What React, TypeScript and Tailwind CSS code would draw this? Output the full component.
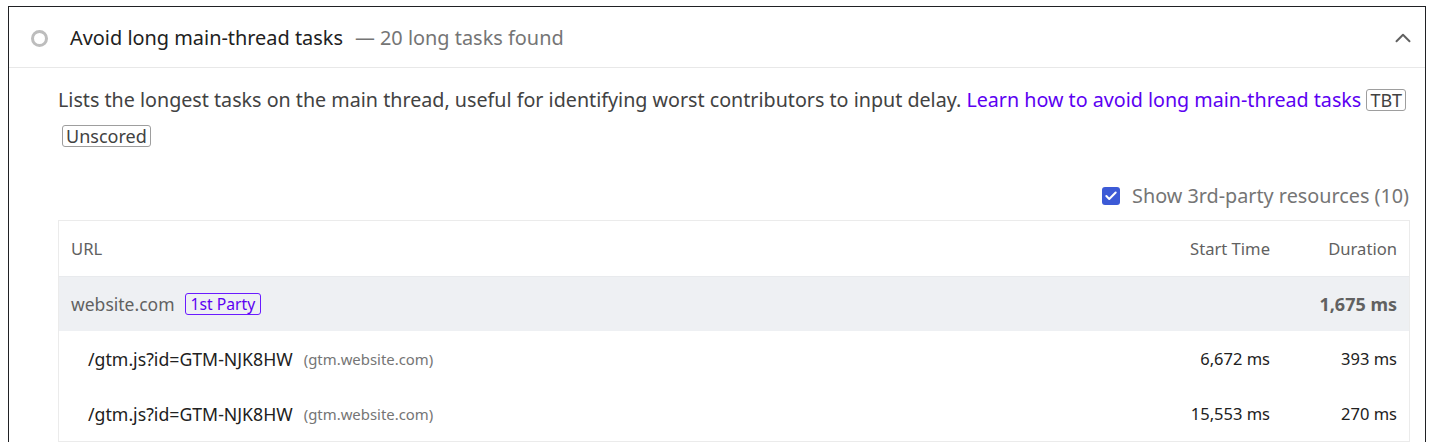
import { Check, ChevronUp } from 'lucide-react';

type Task = { url: string; host: string; start: string; duration: string };

const tasks: Task[] = [
  { url: '/gtm.js?id=GTM-NJK8HW', host: '(gtm.website.com)', start: '6,672 ms', duration: '393 ms' },
  { url: '/gtm.js?id=GTM-NJK8HW', host: '(gtm.website.com)', start: '15,553 ms', duration: '270 ms' },
];

function Badge({ children }: { children: React.ReactNode }) {
  return (
    <span className="inline-block border border-[#9e9e9e] rounded-[3px] px-[3px] leading-[20px] text-[18px] text-[#424242]">
      {children}
    </span>
  );
}

export default function App() {
  return (
    <div
      className="pt-[6px] pl-[8px] bg-white h-[445px] overflow-hidden"
      style={{ fontFamily: '"Noto Sans", "Open Sans", sans-serif' }}
    >
      <div className="w-[1418px] border border-b-0 border-[#202124] bg-white">
        {/* Header */}
        <div className="h-[61px] pt-[2px] flex items-center pl-[22px] pr-[9px] border-b border-[#e8e8e8]">
          <span className="w-[17px] h-[17px] rounded-full border-[3px] border-[#bdbdbd] shrink-0" />
          <span className="ml-[22px] text-[19.9px] text-[#212121]">Avoid long main-thread tasks</span>
          <span className="ml-[12px] text-[19.9px] text-[#757575]">— 20 long tasks found</span>
          <ChevronUp className="ml-auto w-[26px] h-[26px] text-[#616161]" strokeWidth={1.8} />
        </div>

        {/* Body */}
        <div className="pl-[49px] pr-[15px]">
          <div className="mt-[14px] text-[19.7px] leading-[36px] text-[#424242]">
            Lists the longest tasks on the main thread, useful for identifying worst contributors to input delay.{' '}
            <a className="text-[#5c00f2]">Learn how to avoid long main-thread tasks</a>{' '}
            <Badge>TBT</Badge>
            <br />
            <span className="ml-[4px]">
              <Badge>Unscored</Badge>
            </span>
          </div>

          <div className="mt-[30px] flex items-center justify-end pr-[1px] h-[24px]">
            <span className="w-[18px] h-[18px] rounded-[3px] bg-[#3c5ad6] flex items-center justify-center">
              <Check className="w-[14px] h-[14px] text-white" strokeWidth={3.5} />
            </span>
            <span className="ml-[12px] text-[19.8px] text-[#757575]">Show 3rd-party resources (10)</span>
          </div>

          <div className="mt-[12px] border border-[#ebebeb]">
            <div className="h-[55px] pt-[2px] flex items-center px-[12px] text-[16.6px] text-[#616161]">
              <span className="flex-1">URL</span>
              <span className="w-[200px] text-right">Start Time</span>
              <span className="w-[127px] text-right">Duration</span>
            </div>
            <div className="h-[55px] flex items-center px-[12px] bg-[#eef0f3] border-t border-[#e8eaed]">
              <span className="text-[17.5px] text-[#616161]">website.com</span>
              <span className="ml-[10px] border border-[#6a1bff] rounded-[3px] px-[5px] leading-[20px] text-[15.7px] text-[#5c00f2]">
                1st Party
              </span>
              <span className="ml-auto text-[18px] font-bold text-[#616161]">1,675 ms</span>
            </div>
            {tasks.map((t, i) => (
              <div key={i} className="h-[55px] pt-[2px] flex items-center pl-[29px] pr-[12px]">
                <span className="text-[17.7px] text-[#212121]">{t.url}</span>
                <span className="ml-[11px] text-[14.9px] text-[#757575]">{t.host}</span>
                <span className="ml-auto w-[200px] text-right text-[16.5px] text-[#212121]">{t.start}</span>
                <span className="w-[127px] text-right text-[16.5px] text-[#212121]">{t.duration}</span>
              </div>
            ))}
          </div>
        </div>
      </div>
    </div>
  );
}
